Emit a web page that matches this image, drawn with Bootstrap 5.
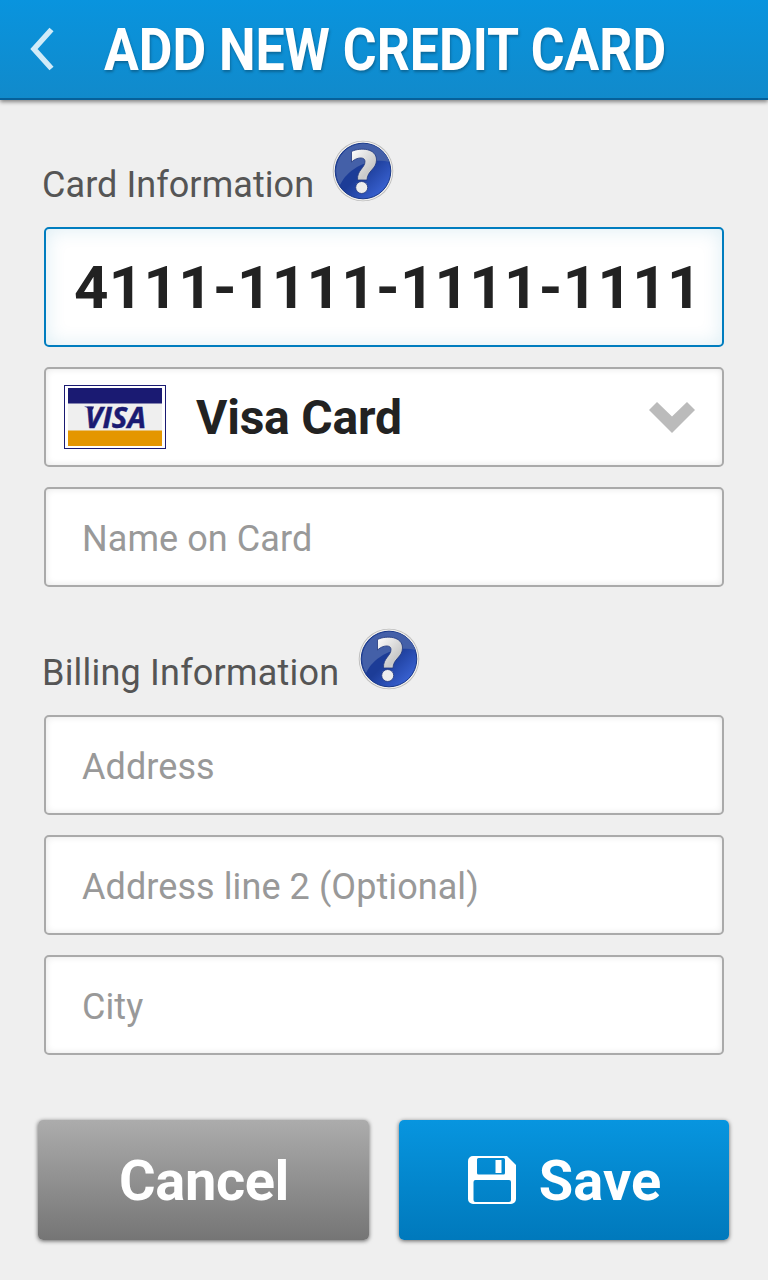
<!DOCTYPE html>
<html lang="en">
<head>
<meta charset="utf-8">
<meta name="viewport" content="width=device-width, initial-scale=1">
<title>Add New Credit Card</title>
<link href="https://cdn.jsdelivr.net/npm/bootstrap@5.3.0/dist/css/bootstrap.min.css" rel="stylesheet">
<style>
body{background:#efefef;font-family:Roboto,"Liberation Sans",sans-serif;color:#222;height:1280px;overflow:hidden}
.topbar{height:100px;padding:0 0 0 29px;background:linear-gradient(#0994de,#118acb);border-bottom:2px solid #06609a;box-shadow:0 2px 4px rgba(0,0,0,.45)}
.topbar h1{font-size:60px;line-height:98px;font-weight:700;color:#fff;margin:0 0 0 49px;padding-top:1px;white-space:nowrap;transform-origin:0 50%;transform:scaleX(.863);text-shadow:1px 2px 3px rgba(0,0,0,.28)}
.section-head{height:127px;padding-left:42px}
.section-head h2{font-size:36px;line-height:44px;font-weight:400;color:#555;margin:63px 0 0;white-space:nowrap;letter-spacing:.06px}
.section-head svg{margin:40px 0 0 18px}
.section-head.second{height:128px}
.second h2{margin-top:64px;letter-spacing:.2px}
.second svg{margin:41px 0 0 19px}
.fields{padding:0 44px;gap:20px}
.field{height:100px;border:2px solid #aaa;border-radius:5px;background:#fff;padding:3px 36px 0;font-size:36px;color:#222;letter-spacing:.08px;box-shadow:inset 0 0 7px rgba(0,0,0,.1)}
.field:focus{box-shadow:inset 0 0 7px rgba(0,0,0,.1)}
.field::placeholder{color:#999;opacity:1}
.number{height:120px;border-color:#007dbf;padding:0 26px 0 28px;font-size:60px;font-weight:700;letter-spacing:.32px;box-shadow:inset 0 0 20px rgba(0,125,175,.14)}
.picker{padding:0 27px 0 18px;font-size:48px;font-weight:700}
.picker-text{margin-left:30px;padding-top:2px;letter-spacing:-.2px}
.actions{padding:65px 39px 0 38px;gap:30px}
.action{height:120px;border:0;border-radius:5px;color:#fff!important;font-size:56px;font-weight:700;flex:1 1 0;padding-top:8px;box-shadow:0 1px 4px rgba(0,0,0,.6)}
.cancel{background:linear-gradient(#acacac,#757575);letter-spacing:-.4px;padding-left:13px}
.save{background:linear-gradient(#0795df,#0079bc)}
.save svg{margin:-2px 23px 0 1px}
</style>
</head>
<body>
<header class="topbar d-flex align-items-center">
  <svg width="26" height="46" viewBox="0 0 26 46"><path d="M22.500 3.500 5 23 22.500 42.500" fill="none" stroke="#d1ebf8" stroke-width="5.500"/></svg>
  <h1>ADD NEW CREDIT CARD</h1>
</header>
<main>
  <svg width="0" height="0" class="position-absolute">
    <defs>
      <linearGradient id="ball" x1="0" y1="0" x2="1" y2="1"><stop offset=".5" stop-color="#1c3c97"/><stop offset=".92" stop-color="#3d67da"/></linearGradient>
      <linearGradient id="silver" x1="0" y1="0" x2="1" y2="1"><stop stop-color="#fff"/><stop offset=".7" stop-color="#c9c9c9"/><stop offset="1" stop-color="#eee"/></linearGradient>
      <symbol id="help" viewBox="0 0 62 62">
        <circle cx="31" cy="31" r="30.300" fill="#bbb"/>
        <circle cx="31" cy="31" r="29.400" fill="#f5f3ef"/>
        <circle cx="31" cy="31" r="27.800" fill="url(#ball)" stroke="#173789"/>
        <path d="M8 45A27.300 27.300 0 0 1 31 3.700A27.300 27.300 0 0 1 57.500 22C46 19 34 22 25 27C17 32 12 37 8 45Z" fill="#4460a8"/>
        <path d="M19.500 11.500C29 7 44.500 8.500 44.500 20C44.500 29 35 31 35 40H25.500C25 30 33 28 33 21.500C33 16 24 17.500 19.500 22Z" fill="url(#silver)" stroke="#22397d" stroke-width=".8"/>
        <circle cx="29.700" cy="47.500" r="6" fill="#ededed" stroke="#22397d" stroke-width=".8"/>
      </symbol>
    </defs>
  </svg>
  <div class="section-head d-flex align-items-start">
    <h2>Card Information</h2>
    <svg width="62" height="62"><use href="#help"/></svg>
  </div>
  <div class="fields d-flex flex-column">
    <input class="form-control field number" type="text" value="4111-1111-1111-1111" aria-label="Card number">
    <button type="button" class="field picker d-flex align-items-center w-100 text-start">
      <svg width="102" height="64" viewBox="0 0 102 64">
        <rect x=".5" y=".5" width="101" height="63" fill="#fff" stroke="#1a1a72"/>
        <rect x="4" y="3" width="94" height="58" fill="#efefef"/>
        <rect x="4" y="3" width="94" height="15.500" fill="#1a1a72"/>
        <rect x="4" y="45.500" width="94" height="15.500" fill="#e49600"/>
        <text x="21" y="42.500" font-family="Open Sans,sans-serif" font-size="29" font-weight="700" font-style="italic" fill="#1a1a72" stroke="#1a1a72" stroke-width=".5" textLength="61" lengthAdjust="spacingAndGlyphs">VISA</text>
        <path d="M20 21.500H30L29 24.500H25Q24 22.500 20 21.500Z" fill="#1a1a72"/>
      </svg>
      <span class="picker-text flex-grow-1">Visa Card</span>
      <svg width="46" height="31" viewBox="0 0 46 31"><path d="M0 8 8 0 23 14.500 38 0 46 8 23 31Z" fill="#bbb"/></svg>
    </button>
    <input class="form-control field" type="text" placeholder="Name on Card">
  </div>
  <div class="section-head second d-flex align-items-start">
    <h2>Billing Information</h2>
    <svg width="62" height="62"><use href="#help"/></svg>
  </div>
  <div class="fields d-flex flex-column">
    <input class="form-control field" type="text" placeholder="Address">
    <input class="form-control field" type="text" placeholder="Address line 2 (Optional)">
    <input class="form-control field" type="text" placeholder="City">
  </div>
  <div class="actions d-flex">
    <button type="button" class="btn action cancel">Cancel</button>
    <button type="button" class="btn action save d-flex align-items-center justify-content-center">
      <svg width="48" height="48" viewBox="0 0 48 48"><path fill="#fff" fill-rule="evenodd" d="M5 0H39L48 9V43a5 5 0 0 1-5 5H5a5 5 0 0 1-5-5V5a5 5 0 0 1 5-5ZM9 3.500V17a1.500 1.500 0 0 0 1.500 1.500H35.500A1.500 1.500 0 0 0 37 17V3.500A1.500 1.500 0 0 0 35.500 2H10.500A1.500 1.500 0 0 0 9 3.500ZM7.500 24A2 2 0 0 0 5.500 26V44A2 2 0 0 0 7.500 46H41A2 2 0 0 0 43 44V26A2 2 0 0 0 41 24Z"/><path fill="#fff" d="M27.500 4h6v13h-6z"/></svg>
      <span>Save</span>
    </button>
  </div>
</main>
<script src="https://cdn.jsdelivr.net/npm/bootstrap@5.3.0/dist/js/bootstrap.bundle.min.js"></script>
</body>
</html>
